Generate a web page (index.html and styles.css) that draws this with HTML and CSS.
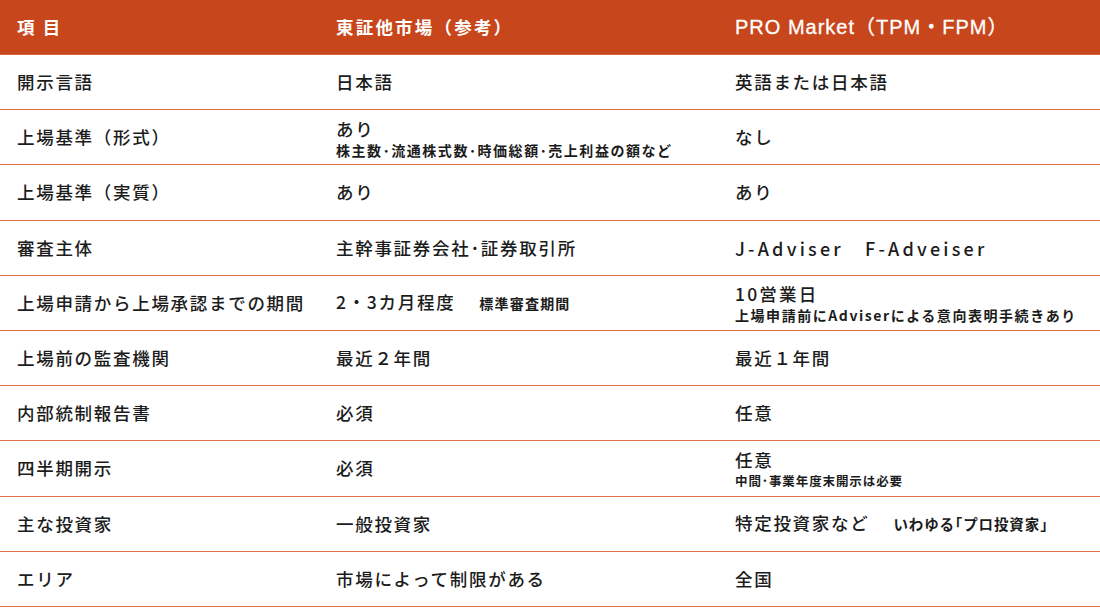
FILE: index.html
```html
<!DOCTYPE html>
<html lang="ja">
<head>
<meta charset="utf-8">
<title>比較表</title>
<link rel="stylesheet" href="styles.css">
</head>
<body>
<div class="table">
  <div class="row head">
    <div class="cell">項 目</div>
    <div class="cell">東証他市場（参考）</div>
    <div class="cell latin">PRO Market（TPM・FPM）</div>
  </div>
  <div class="row">
    <div class="cell">開示言語</div>
    <div class="cell">日本語</div>
    <div class="cell">英語または日本語</div>
  </div>
  <div class="row">
    <div class="cell">上場基準（形式）</div>
    <div class="cell stack"><span>あり</span><span class="sub">株主数･流通株式数･時価総額･売上利益の額など</span></div>
    <div class="cell">なし</div>
  </div>
  <div class="row">
    <div class="cell">上場基準（実質）</div>
    <div class="cell">あり</div>
    <div class="cell">あり</div>
  </div>
  <div class="row">
    <div class="cell">審査主体</div>
    <div class="cell">主幹事証券会社･証券取引所</div>
    <div class="cell wide">J-Adviser　F-Adveiser</div>
  </div>
  <div class="row">
    <div class="cell">上場申請から上場承認までの期間</div>
    <div class="cell">2・3カ月程度<span class="note">標準審査期間</span></div>
    <div class="cell stack"><span class="num">10営業日</span><span class="sub">上場申請前にAdviserによる意向表明手続きあり</span></div>
  </div>
  <div class="row">
    <div class="cell">上場前の監査機関</div>
    <div class="cell">最近２年間</div>
    <div class="cell">最近１年間</div>
  </div>
  <div class="row">
    <div class="cell">内部統制報告書</div>
    <div class="cell">必須</div>
    <div class="cell">任意</div>
  </div>
  <div class="row">
    <div class="cell">四半期開示</div>
    <div class="cell">必須</div>
    <div class="cell stack"><span>任意</span><span class="sub small">中間･事業年度末開示は必要</span></div>
  </div>
  <div class="row">
    <div class="cell">主な投資家</div>
    <div class="cell">一般投資家</div>
    <div class="cell">特定投資家など<span class="note2">いわゆる｢プロ投資家｣</span></div>
  </div>
  <div class="row">
    <div class="cell">エリア</div>
    <div class="cell">市場によって制限がある</div>
    <div class="cell">全国</div>
  </div>
</div>
</body>
</html>
```
FILE: styles.css
```css
html, body {
  margin: 0;
  padding: 0;
  background: #ffffff;
}
body {
  font-family: "Noto Sans CJK JP", "Noto Sans", sans-serif;
  color: #1c1c1c;
  width: 1100px;
  height: 609px;
  overflow: hidden;
}
.table {
  display: flex;
  flex-direction: column;
}
.row {
  display: grid;
  grid-template-columns: 319px 399px 382px;
  align-items: center;
  height: 55.2px;
  box-sizing: border-box;
  border-bottom: 1.5px solid #e2704a;
}
.row.head {
  height: 55px;
  background: #c8461b;
  color: #ffffff;
  font-weight: 700;
  border-bottom: 1px solid #d9643c;
}
.cell {
  padding-left: 17px;
  font-size: 17.5px;
  font-weight: 500;
  letter-spacing: 1.7px;
  line-height: 22px;
  white-space: nowrap;
}
.head .cell {
  font-weight: 700;
  letter-spacing: 2.2px;
}
.head .cell.latin {
  font-family: "Liberation Sans", "Noto Sans CJK JP", sans-serif;
  font-weight: 400;
  letter-spacing: 1px;
  font-size: 20px;
  -webkit-text-stroke: 0.3px #ffffff;
}
.stack {
  display: flex;
  flex-direction: column;
  padding-top: 3px;
}
.sub {
  font-size: 14px;
  font-weight: 700;
  letter-spacing: 1.55px;
  line-height: 20px;
}
.sub.small {
  font-size: 12.5px;
  letter-spacing: 0.9px;
}
.num {
  letter-spacing: 2.2px;
}
.note {
  font-size: 14px;
  font-weight: 700;
  letter-spacing: 1.2px;
  margin-left: 24px;
}
.note2 {
  font-size: 14.5px;
  font-weight: 700;
  letter-spacing: 0.9px;
  margin-left: 24px;
}
.wide {
  letter-spacing: 3.2px;
  font-size: 18px;
}
```
